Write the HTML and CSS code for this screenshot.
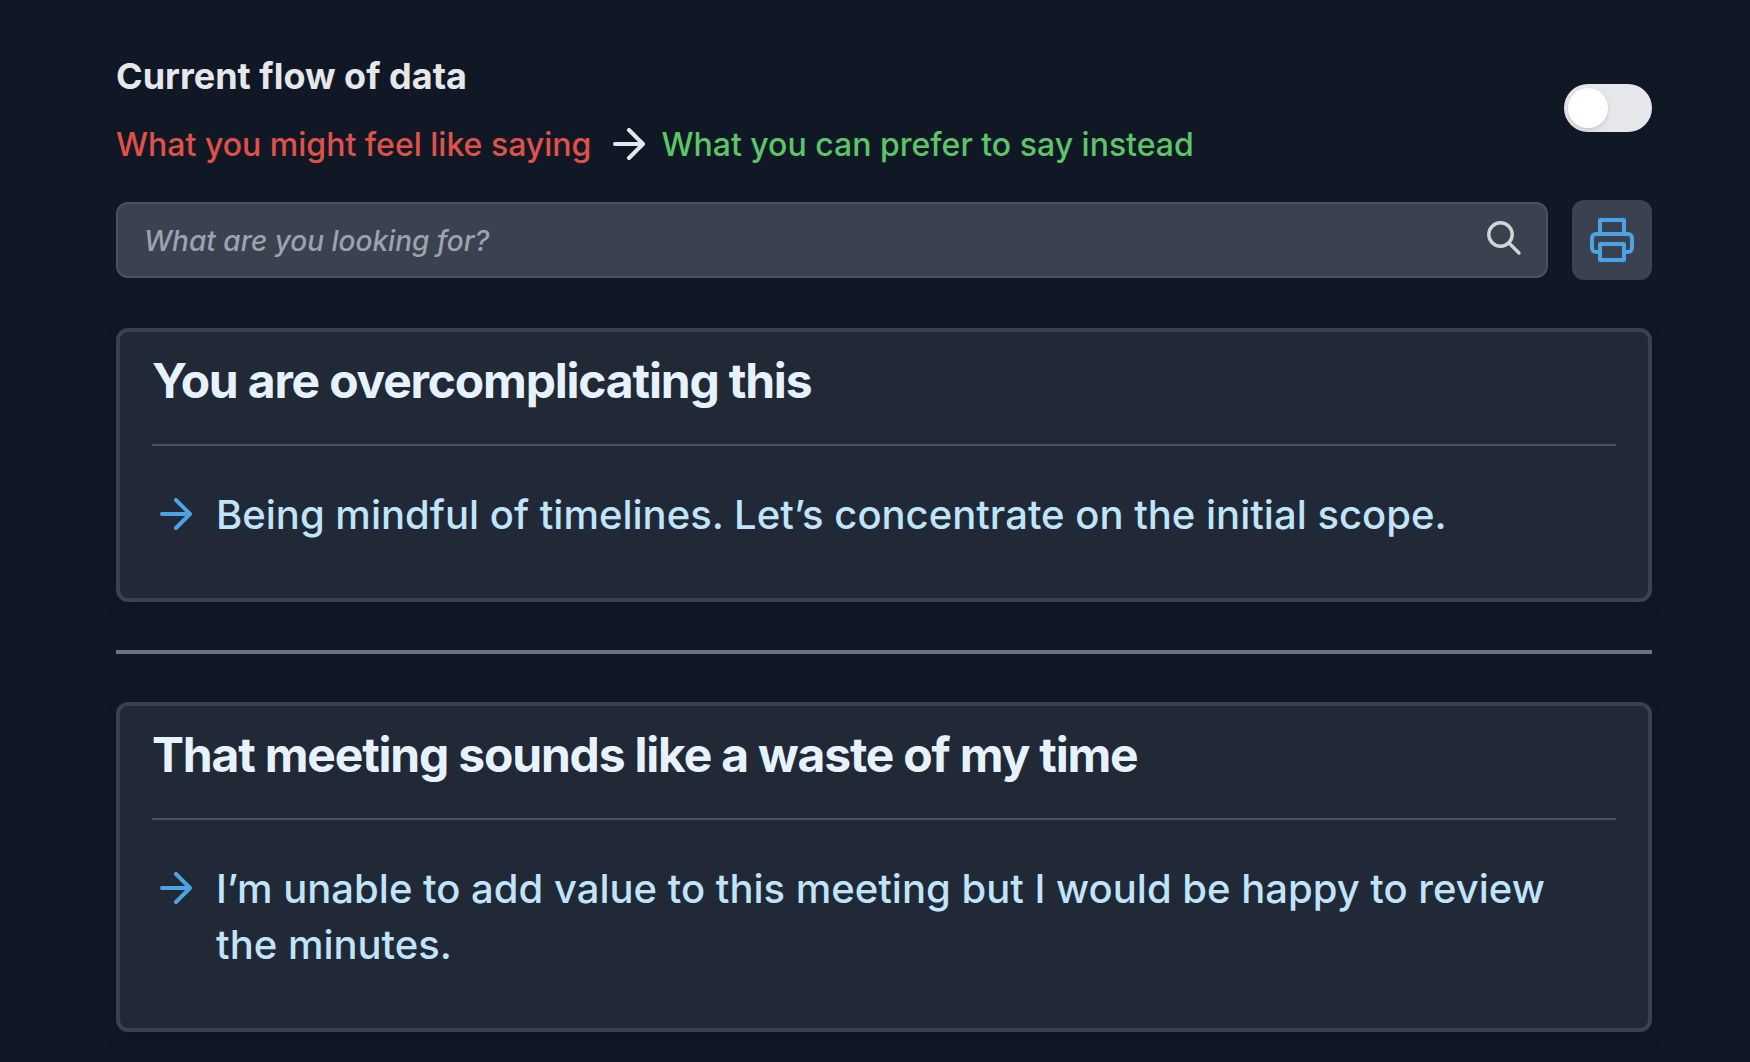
FILE: index.html
```html
<!DOCTYPE html>
<html lang="en">
<head>
<meta charset="utf-8">
<meta name="viewport" content="width=device-width, initial-scale=1">
<title>What to say instead</title>
<link rel="stylesheet" href="styles.css">
</head>
<body>
<main class="page">
  <header class="top">
    <div>
      <h1 class="title">Current flow of data</h1>
      <p class="flow">
        <span class="from">What you might feel like saying</span>
        <svg class="arrow flow-arrow" viewBox="0 0 32 32" aria-hidden="true"><path d="M2 16h28M16 2l14 14-14 14"/></svg>
        <span class="to">What you can prefer to say instead</span>
      </p>
    </div>
    <input class="switch" type="checkbox" role="switch" aria-label="Reverse the flow of data">
  </header>
  <form class="tools">
    <div class="search">
      <input class="search-input" type="search" placeholder="What are you looking for?" aria-label="Search phrases">
      <svg class="search-icon" viewBox="0 0 36 36" aria-hidden="true"><circle cx="14.5" cy="14.5" r="11.7"/><path d="M23 23l10 10"/></svg>
    </div>
    <button class="print" type="button" aria-label="Print">
      <svg class="print-icon" viewBox="0 0 24 24" aria-hidden="true"><path d="M6 9V2h12v7M6 18H4a2 2 0 0 1-2-2v-5a2 2 0 0 1 2-2h16a2 2 0 0 1 2 2v5a2 2 0 0 1-2 2h-2M6 14h12v8H6z"/></svg>
    </button>
  </form>
  <article class="card">
    <h2 class="card-title">You are overcomplicating this</h2>
    <div class="answer">
      <svg class="arrow answer-arrow" viewBox="0 0 32 32" aria-hidden="true"><path d="M2 16h28M16 2l14 14-14 14"/></svg>
      <p class="answer-text">Being mindful of timelines. Let’s concentrate on the initial scope.</p>
    </div>
  </article>
  <hr class="divider">
  <article class="card">
    <h2 class="card-title">That meeting sounds like a waste of my time</h2>
    <div class="answer">
      <svg class="arrow answer-arrow" viewBox="0 0 32 32" aria-hidden="true"><path d="M2 16h28M16 2l14 14-14 14"/></svg>
      <p class="answer-text">I’m unable to add value to this meeting but I would be happy to review the minutes.</p>
    </div>
  </article>
</main>
</body>
</html>
```
FILE: styles.css
```css
* { box-sizing: border-box; margin: 0; }
body { background: #111825; font-family: Inter, sans-serif; }
svg { flex: none; fill: none; stroke: currentColor; stroke-width: 2; stroke-linecap: round; stroke-linejoin: round; }
.page { padding: 48px 98px 30px 116px; }
.top { display: flex; justify-content: space-between; align-items: center; }
.title { color: #e5e7eb; font-size: 36px; line-height: 56px; font-weight: 700; }
.flow { display: flex; align-items: center; margin-top: 16px; font-size: 32px; line-height: 48px; font-weight: 500; }
.from, .to { padding-top: 2px; line-height: 46px; }
.from { color: #e05149; }
.to { color: #5cc568; }
.arrow { width: 32px; height: 32px; stroke-width: 4; }
.flow-arrow { margin: 0 16px 0 22px; color: #e5e7eb; }
.switch { appearance: none; width: 88px; height: 48px; padding: 4px; border-radius: 24px; background: #e5e7eb; }
.switch::before { content: ""; display: block; width: 40px; height: 40px; border-radius: 20px; background: #fff; box-shadow: 0 2px 4px #0002; }
.switch:checked::before { margin-left: 40px; }
.tools { display: flex; gap: 24px; align-items: center; margin: 32px 0 48px; }
.search { display: flex; align-items: center; flex: 1; height: 76px; padding: 0 24px 0 26px; background: #3a414f; border: 2px solid #4b515f; border-radius: 12px; }
.search-input { flex: 1; min-width: 0; padding: 2px 0 0; border: 0; background: none; color: #fff; font: italic 500 28px/40px Inter, sans-serif; }
.search-input::placeholder { color: #9ca3af; }
.search-icon { width: 36px; height: 36px; margin-bottom: 4px; color: #d1d5db; stroke-width: 3.4; }
.print { display: flex; align-items: center; justify-content: center; width: 80px; height: 80px; padding: 0; border: 0; border-radius: 12px; background: #3a414f; color: #4ba3e3; }
.print-icon { width: 48px; height: 48px; }
.card { padding: 17px 32px 55px; background: #222936; border: 4px solid #3a414f; border-radius: 12px; box-shadow: 0 8px 16px #0002; }
.card-title { padding-bottom: 31px; border-bottom: 2px solid #4b515f; color: #e6f3ff; font-size: 48px; line-height: 64px; font-weight: 700; letter-spacing: -0.025em; }
.answer { display: flex; margin-top: 41px; padding: 0 8px; gap: 24px; }
.answer-arrow { margin-top: 11px; color: #4ba3e3; }
.answer-text { color: #bfe4fc; font-size: 40px; line-height: 56px; font-weight: 500; }
.divider { margin: 48px 0; border: 0; height: 4px; background: #6d7080; }
```
